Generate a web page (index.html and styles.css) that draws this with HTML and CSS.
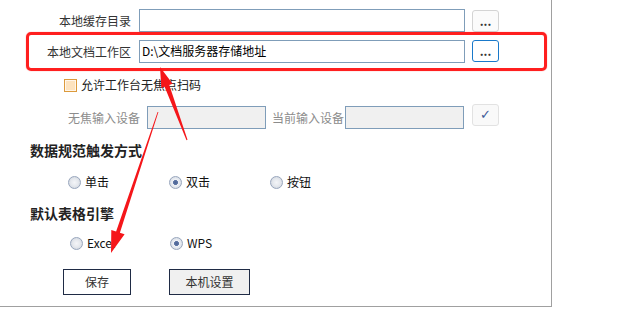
FILE: index.html
```html
<!DOCTYPE html>
<html lang="zh-CN">
<head>
<meta charset="utf-8">
<title>设置</title>
<link rel="stylesheet" href="styles.css">
</head>
<body>
<div class="panel">
  <div class="row path-row first">
    <span class="lbl">本地缓存目录</span>
    <div class="input wide"></div>
    <button class="dots">...</button>
  </div>
  <div class="row path-row second">
    <span class="lbl">本地文档工作区</span>
    <div class="input wide">D:\文档服务器存储地址</div>
    <button class="dots active">...</button>
  </div>
  <div class="row chk-row">
    <span class="chk"></span><span class="chk-text">允许工作台无焦点扫码</span>
  </div>
  <div class="row dev-row">
    <span class="lbl-dev">无焦输入设备</span>
    <div class="input ro"></div>
    <span class="lbl-cur">当前输入设备</span>
    <div class="input ro"></div>
    <button class="ok">✓</button>
  </div>
  <h3 class="title t1">数据规范触发方式</h3>
  <div class="radios r1">
    <label class="opt"><span class="radio"></span>单击</label>
    <label class="opt"><span class="radio on"></span>双击</label>
    <label class="opt"><span class="radio"></span>按钮</label>
  </div>
  <h3 class="title t2">默认表格引擎</h3>
  <div class="radios r2">
    <label class="opt"><span class="radio"></span>Excel</label>
    <label class="opt"><span class="radio on"></span>WPS</label>
  </div>
  <div class="actions">
    <button class="btn save">保存</button>
    <button class="btn local">本机设置</button>
  </div>
</div>
<div class="callout"></div>
<svg class="arrows" width="620" height="318" viewBox="0 0 620 318">
  <polygon points="187.5,139.8 169.3,84.9 172.6,83.7 160,67 161.3,87.9 164.6,86.7 186.5,140.2" />
  <polygon points="158.4,112.1 119.9,232.7 124.6,234.3 111,253 111.3,229.9 116.1,231.5 157.6,111.9" />
</svg>
</body>
</html>
```
FILE: styles.css
```css
html, body {
  margin: 0;
  padding: 0;
  background: #fff;
}
body {
  font-family: "Noto Sans CJK SC", "Microsoft YaHei", sans-serif;
  font-size: 12px;
  color: #222;
  width: 620px;
  height: 318px;
  position: relative;
  overflow: hidden;
}
.panel {
  box-sizing: border-box;
  width: 552px;
  height: 307px;
  border-right: 1px solid #a0a0a0;
  border-bottom: 1px solid #a0a0a0;
  padding-top: 9px;
}
.row {
  display: flex;
  align-items: center;
}
.path-row {
  height: 23px;
}
.path-row.second {
  margin-top: 8px;
}
.lbl {
  width: 131px;
  margin-right: 8px;
  text-align: right;
  color: #333;
  line-height: 20px;
}
.input {
  box-sizing: border-box;
  height: 23px;
  border: 1px solid #7f9db9;
  background: #fff;
  line-height: 20px;
  padding-left: 2px;
  color: #000;
  white-space: nowrap;
}
.input.wide {
  width: 326px;
}
.input.ro {
  width: 119px;
  background: #f0f0f0;
}
.dots {
  box-sizing: border-box;
  width: 27px;
  height: 22px;
  margin-left: 7px;
  border: 1px solid #d4d4d4;
  border-radius: 3px;
  background: #fbfbfb;
  font-family: "Noto Sans CJK SC", sans-serif;
  font-size: 12px;
  font-weight: bold;
  color: #333;
  padding: 0;
  line-height: 20px;
  align-self: flex-start;
}
.path-row.first .dots {
  margin-top: 1px;
}
.dots.active {
  border-color: #1979ca;
  background: #fff;
}
.chk-row {
  margin-top: 12px;
  height: 20px;
  padding-left: 64px;
}
.chk {
  box-sizing: border-box;
  width: 13px;
  height: 13px;
  border: 1px solid #dc9a3c;
  background: #fde3bf;
  box-shadow: inset 0 0 0 1px #fff6ea;
}
.chk-text {
  margin-left: 4px;
  line-height: 20px;
  color: #222;
}
.dev-row {
  margin-top: 11px;
  height: 23px;
}
.lbl-dev {
  width: 140px;
  margin-right: 7px;
  text-align: right;
  color: #8c8c8c;
  line-height: 20px;
}
.lbl-cur {
  width: 72px;
  margin-left: 6px;
  margin-right: 1px;
  color: #8c8c8c;
  line-height: 20px;
  white-space: nowrap;
}
.ok {
  box-sizing: border-box;
  width: 27px;
  height: 22px;
  margin-left: 8px;
  margin-top: -2px;
  align-self: flex-start;
  border: 1px solid #e2e2e2;
  border-radius: 3px;
  background: #f9f9f9;
  color: #3d5a98;
  font-size: 13px;
  padding: 0;
  line-height: 20px;
  font-family: "DejaVu Sans", sans-serif;
}
.title {
  margin: 0;
  padding-left: 30px;
  font-size: 14px;
  font-weight: bold;
  line-height: 20px;
  color: #222;
}
.title.t1 {
  margin-top: 11px;
}
.title.t2 {
  margin-top: 11px;
}
.radios {
  display: flex;
  height: 20px;
  align-items: center;
}
.radios.r1 {
  margin-top: 12px;
  padding-left: 68px;
}
.radios.r2 {
  margin-top: 10px;
  padding-left: 70px;
}
.radios.r2 .opt:first-child {
  width: 100px;
}
.opt {
  display: flex;
  align-items: center;
  width: 101px;
  line-height: 20px;
  color: #111;
}
.radio {
  box-sizing: border-box;
  width: 13px;
  height: 13px;
  border-radius: 50%;
  border: 1px solid #98a6bd;
  background: radial-gradient(circle at 50% 50%, #f4f5f8 0, #e6e9ee 45%, #c9cfd9 100%);
  margin-right: 4px;
  position: relative;
}
.radio.on {
  background: radial-gradient(circle at 50% 50%, #4d6596 0, #5c74a4 28%, #eef1f6 36%, #e2e6ed 60%, #c5ccd8 100%);
}
.actions {
  display: flex;
  margin-top: 16px;
  padding-left: 63px;
}
.btn {
  box-sizing: border-box;
  height: 26px;
  border: 1px solid #1f2b45;
  font-family: "Noto Sans CJK SC", sans-serif;
  font-size: 12px;
  color: #333;
  padding: 0;
  line-height: 22px;
}
.btn.save {
  width: 68px;
  background: #fff;
}
.btn.local {
  width: 81px;
  margin-left: 38px;
  background: #f0f0f0;
}
.callout {
  position: absolute;
  left: 26px;
  top: 32px;
  width: 521px;
  height: 39px;
  box-sizing: border-box;
  border: 3px solid #ff1f1f;
  border-radius: 5px;
  box-shadow: 0 0 1px #ff6060;
}
.arrows {
  position: absolute;
  left: 0;
  top: 0;
  pointer-events: none;
}
.arrows polygon {
  fill: #f5161a;
}
```
